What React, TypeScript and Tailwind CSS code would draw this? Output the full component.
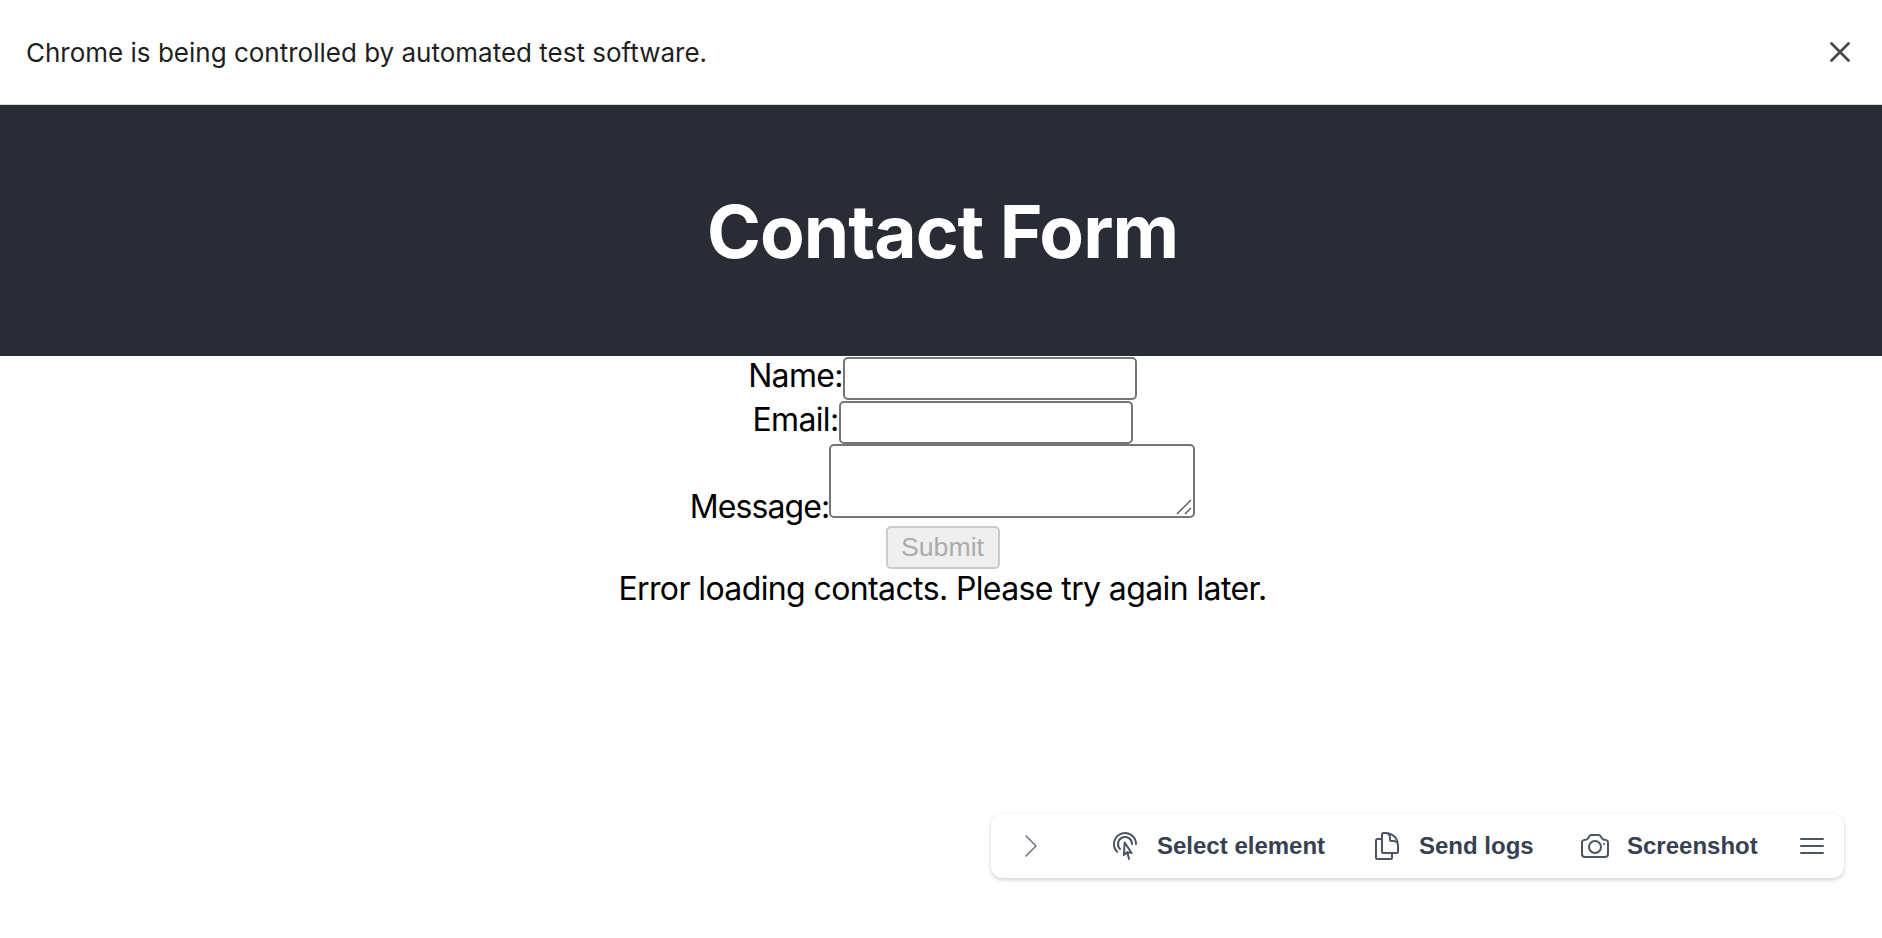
import React from "react";
import {
  HiOutlineBars3,
  HiOutlineCamera,
  HiOutlineDocumentDuplicate,
} from "react-icons/hi2";

const field =
  "block rounded-[5px] border-2 border-[#767676] bg-white outline-none";
const label = "text-[32px] leading-[38px]";
const tool =
  "flex items-center text-[24px] font-bold leading-8 text-[#374151] whitespace-nowrap";

function InfoBar() {
  return (
    <div className="flex h-[105px] items-center justify-between border-b border-[#d5dad9] pl-[26px] pr-[31px]">
      <span className="pt-[2px] text-[26px] leading-8 text-[#1f1f1f]">
        Chrome is being controlled by automated test software.
      </span>
      <button aria-label="Close" className="text-[#474747]">
        <svg width="22" height="22" viewBox="0 0 22 22" fill="none" stroke="currentColor" strokeWidth="2.7" strokeLinecap="round">
          <path d="M2.5 2.5 19.5 19.5M19.5 2.5 2.5 19.5" />
        </svg>
      </button>
    </div>
  );
}

function ContactForm() {
  return (
    <form className="flex flex-col items-center">
      <label className="flex h-11 items-start">
        <span className={label + " mt-[1px] tracking-[-0.66px]"}>Name:</span>
        <input className={field + " mt-[1px] h-[43px] w-[294px]"} />
      </label>
      <label className="flex h-11 items-start">
        <span className={label + " mt-[1px] tracking-[-0.63px]"}>Email:</span>
        <input className={field + " mt-[1px] h-[43px] w-[294px]"} />
      </label>
      <label className="flex h-[82px] items-start">
        <span className={label + " mt-[44px] tracking-[-0.9px]"}>Message:</span>
        <span className="relative">
          <textarea className={field + " h-[74px] w-[366px] resize-none"} />
          <svg className="absolute bottom-[3px] right-[3px]" width="16" height="16" viewBox="0 0 16 16" fill="none" stroke="#555" strokeWidth="1.4">
            <path d="M1 15 15 1M9 15l6-6" />
          </svg>
        </span>
      </label>
      <button
        disabled
        className="h-[43px] w-[114px] rounded-[5px] border-2 border-[#cbcbcb] bg-[#efefef] text-[26.67px] leading-none text-[#acacac] font-['Liberation_Sans',sans-serif]"
      >
        Submit
      </button>
    </form>
  );
}

function Toolbar() {
  return (
    <div className="mr-[38px] flex h-16 w-[853px] items-center rounded-xl bg-white pl-6 font-['Liberation_Sans',Arial,sans-serif] shadow-[0_2px_4px_rgba(30,50,80,0.2),0_0_3px_rgba(0,0,0,0.04)]">
      <svg className="mr-[62px] size-8 text-[#6b7280]" viewBox="0 0 24 24" fill="none" stroke="currentColor" strokeWidth="1.1" strokeLinecap="round" strokeLinejoin="round">
        <path d="m8.25 4.5 7.5 7.5-7.5 7.5" />
      </svg>
      <button className={tool + " w-[262px]"}>
        <svg className="mr-4 size-8 shrink-0 text-[#4b5563]" viewBox="0 0 24 24" fill="none" stroke="currentColor" strokeWidth="1.5" strokeLinecap="round" strokeLinejoin="round">
          <path d="M15.042 21.672 13.684 16.6m0 0-2.51 2.225.569-9.47 5.227 7.917-3.286-.672Zm-7.518-.267A8.25 8.25 0 1 1 20.25 10.5M8.288 14.212A5.25 5.25 0 1 1 17.25 10.5" />
        </svg>
        Select element
      </button>
      <button className={tool + " w-[208px]"}>
        <HiOutlineDocumentDuplicate className="mr-4 size-8 shrink-0 text-[#4b5563]" />
        Send logs
      </button>
      <button className={tool + " w-[217px]"}>
        <HiOutlineCamera className="mr-4 size-8 shrink-0 text-[#4b5563]" />
        Screenshot
      </button>
      <HiOutlineBars3 className="size-8 shrink-0 text-[#4b5563]" />
    </div>
  );
}

export default function App() {
  return (
    <div className="flex h-[938px] w-full flex-col overflow-hidden bg-white font-[Inter,sans-serif] text-black">
      <InfoBar />
      <header className="flex h-[251px] items-center justify-center bg-[#292c35] pl-[3px] pt-[2px]">
        <h1 className="text-[73px] font-bold leading-none tracking-[-1px] text-white">
          Contact Form
        </h1>
      </header>
      <main className="flex flex-1 flex-col items-center pl-[3px]">
        <ContactForm />
        <p className={label + " mt-[1px] tracking-[-0.61px]"}>
          Error loading contacts. Please try again later.
        </p>
      </main>
      <footer className="flex justify-end pb-[60px]">
        <Toolbar />
      </footer>
    </div>
  );
}
